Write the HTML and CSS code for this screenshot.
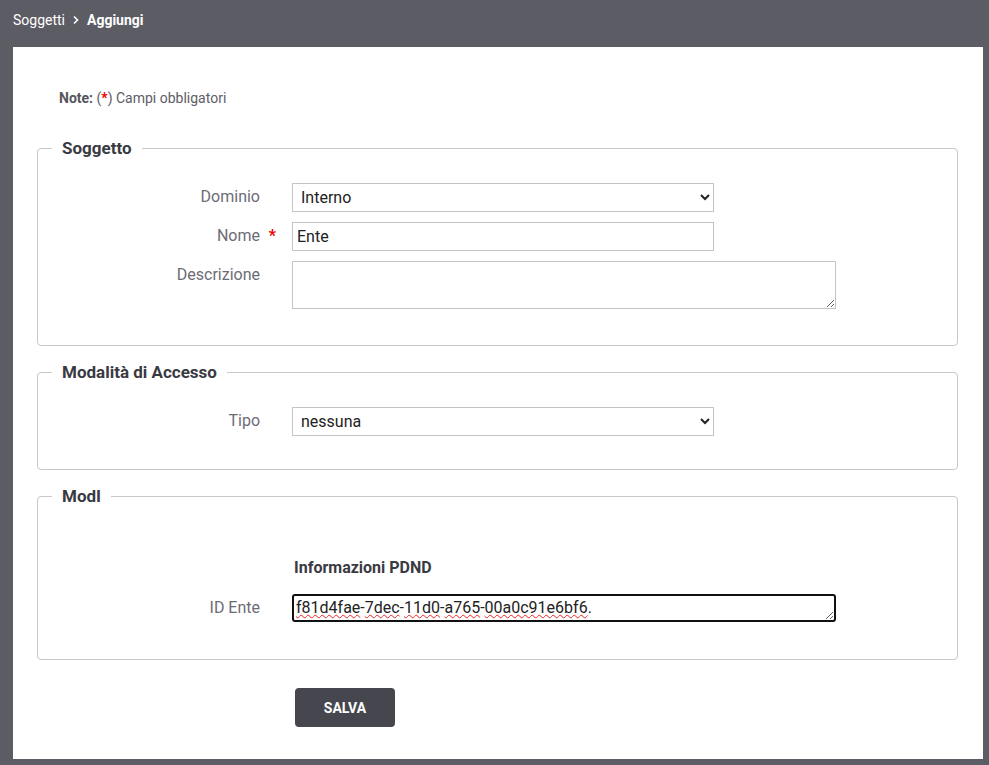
FILE: index.html
```html
<!DOCTYPE html>
<html lang="it">
<head>
<meta charset="utf-8">
<title>Soggetti - Aggiungi</title>
<link rel="stylesheet" href="styles.css">
</head>
<body>
<div class="breadcrumb">
  <span class="crumb">Soggetti</span>
  <svg class="sep" width="8" height="10" viewBox="0 0 8 10" aria-hidden="true"><path d="M2 1.5 L5.5 5 L2 8.5" fill="none" stroke="#fff" stroke-width="1.6"/></svg>
  <span class="crumb current">Aggiungi</span>
</div>
<main class="panel">
  <p class="note"><b>Note:</b> (<span class="req">*</span>) Campi obbligatori</p>

  <fieldset class="group">
    <legend>Soggetto</legend>
    <div class="row">
      <label class="lbl">Dominio</label>
      <select class="field sel"><option>Interno</option><option>Esterno</option></select>
    </div>
    <div class="row">
      <label class="lbl">Nome<span class="star">*</span></label>
      <input class="field txt" type="text" value="Ente">
    </div>
    <div class="row row-last">
      <label class="lbl">Descrizione</label>
      <textarea class="field area"></textarea>
    </div>
  </fieldset>

  <fieldset class="group">
    <legend>Modalità di Accesso</legend>
    <div class="row">
      <label class="lbl">Tipo</label>
      <select class="field sel"><option>nessuna</option></select>
    </div>
  </fieldset>

  <fieldset class="group">
    <legend>ModI</legend>
    <div class="subtitle">Informazioni PDND</div>
    <div class="row row-end">
      <label class="lbl">ID Ente</label>
      <div class="field area focus" contenteditable="true"><span class="sp">f81d4fae</span>-<span class="sp">7dec</span>-<span class="sp">11d0</span>-<span class="sp">a765</span>-<span class="sp">00a0c91e6bf6</span>.</div>
    </div>
  </fieldset>

  <div class="actions">
    <button class="btn" type="button">SALVA</button>
  </div>
</main>
</body>
</html>
```

FILE: styles.css
```css
html, body {
  margin: 0;
  padding: 0;
}
body {
  background: #5c5c65;
  font-family: Roboto, "Liberation Sans", sans-serif;
  color: #333;
  height: 765px;
  overflow: hidden;
}
.breadcrumb {
  height: 41px;
  padding: 0 13px;
  display: flex;
  align-items: center;
  gap: 7px;
  color: #fff;
  font-size: 14px;
  box-sizing: border-box;
  padding-bottom: 1px;
}
.breadcrumb .sep {
  flex: none;
}
.breadcrumb .current {
  font-weight: bold;
}
.panel {
  background: #fff;
  margin: 6px 6px 0 13px;
  height: 712px;
  box-sizing: border-box;
  padding: 43px 25px 0 24px;
}
.note {
  margin: 0 0 32px 22px;
  font-size: 14px;
  line-height: 16px;
  color: #5d5d66;
}
.note b {
  color: #55555d;
}
.req {
  color: #e00;
  font-weight: bold;
}
.group {
  margin: 0 0 16px 0;
  padding: 25px 0 23px 0;
  border: 1px solid #c8c8c8;
  border-radius: 4px;
  min-width: 0;
}
.group legend {
  margin-left: 14px;
  padding: 0 10px;
  font-size: 17px;
  line-height: 20px;
  font-weight: bold;
  color: #3a3a42;
}
.row {
  display: flex;
  align-items: flex-start;
  margin-bottom: 10px;
}
.row-last {
  margin-bottom: 13px;
}
.row-end {
  margin-bottom: 14px;
}
.lbl {
  width: 222px;
  flex: none;
  margin-right: 32px;
  text-align: right;
  font-size: 16px;
  line-height: 28px;
  color: #6c6c75;
  position: relative;
}
.star {
  position: absolute;
  right: -16px;
  top: 0;
  color: #e00;
  font-weight: bold;
  font-size: 16px;
}
.field {
  box-sizing: border-box;
  font-family: Roboto, "Liberation Sans", sans-serif;
  font-size: 16px;
  color: #222;
  background: #fff;
  border: 1px solid #c4c4c4;
  border-radius: 0;
  margin: 0;
}
.sel {
  width: 422px;
  height: 29px;
  padding: 0 4px;
}
.txt {
  width: 422px;
  height: 29px;
  padding: 0 4px;
  outline: none;
}
.area {
  display: block;
  width: 544px;
  height: 48px;
  padding: 2px 4px;
  resize: vertical;
  overflow: hidden;
}
.area.focus {
  height: 28px;
  border: 2px solid #111;
  border-radius: 3px;
  padding: 1px 2px;
  line-height: 22px;
  outline: none;
  white-space: nowrap;
}
.sp {
  text-decoration: underline wavy #e22;
  text-decoration-thickness: 1px;
  text-underline-offset: 1px;
  text-decoration-skip-ink: none;
}
.subtitle {
  margin: 27px 0 16px 256px;
  font-size: 16px;
  line-height: 20px;
  font-weight: bold;
  color: #3a3a42;
}
.actions {
  padding: 12px 0 0 258px;
}
.btn {
  width: 100px;
  height: 39px;
  border: none;
  border-radius: 4px;
  background: #45464e;
  color: #fff;
  font-family: Roboto, "Liberation Sans", sans-serif;
  font-size: 14px;
  font-weight: bold;
  cursor: pointer;
}
```
